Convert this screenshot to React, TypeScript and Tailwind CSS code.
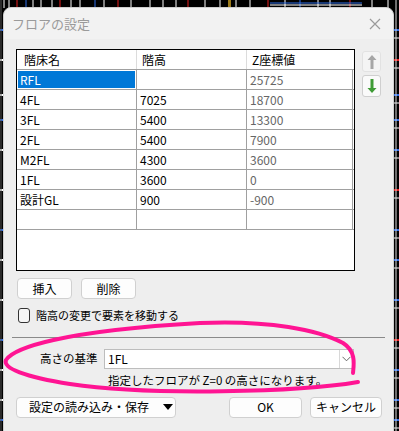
import React from 'react';

const rows = [
  { name: 'RFL', h: '', z: '25725', selected: true },
  { name: '4FL', h: '7025', z: '18700' },
  { name: '3FL', h: '5400', z: '13300' },
  { name: '2FL', h: '5400', z: '7900' },
  { name: 'M2FL', h: '4300', z: '3600' },
  { name: '1FL', h: '3600', z: '0' },
  { name: '設計GL', h: '900', z: '-900' },
  { name: '', h: '', z: '' },
];

const font = { fontFamily: '"Noto Sans CJK JP", "Noto Sans", sans-serif' };

// CAD drawing peeking out behind the dialog
function Backdrop() {
  const xs = [4, 9, 17, 26, 33, 41, 52, 60, 71, 80, 95, 104, 118, 131, 150, 163, 176, 188, 205, 220, 236, 250, 268, 285, 300, 318, 330, 350, 372, 388];
  const ys = [30, 60, 95, 120, 150, 190, 230, 260, 300, 340, 370, 400, 420];
  return (
    <svg className="absolute inset-0" width={399} height={431}>
      <rect width={399} height={431} fill="#000" />
      {xs.map((x, i) => (
        <line key={i} x1={x} y1={0} x2={x} y2={8} stroke={i % 5 === 2 ? '#e81e1e' : i % 7 === 3 ? '#2f6fe8' : '#ffffff'} strokeWidth={1} />
      ))}
      <line x1={270} y1={3} x2={362} y2={3} stroke="#2f6fe8" />
      <line x1={270} y1={5} x2={362} y2={5} stroke="#ffffff" />
      <rect x={228} y={0} width={3} height={7} fill="#9b7a1a" />
      {ys.map((y, i) => (
        <g key={i}>
          <line x1={0} y1={y} x2={3} y2={y} stroke={i % 3 === 0 ? '#2f6fe8' : '#ffffff'} strokeWidth={2} />
          <line x1={394} y1={y} x2={399} y2={y} stroke={i % 4 === 1 ? '#e81e1e' : '#2f6fe8'} strokeWidth={2} />
          <line x1={394} y1={y + 8} x2={399} y2={y + 8} stroke="#ffffff" strokeWidth={1} />
        </g>
      ))}
      <line x1={1} y1={0} x2={1} y2={431} stroke="#555" />
      <line x1={396} y1={0} x2={396} y2={431} stroke="#ddd" />
    </svg>
  );
}

function Arrow({ dir, color }: { dir: 'up' | 'down'; color: string }) {
  return (
    <svg width={10} height={16} viewBox="0 0 10 16">
      {dir === 'up' ? (
        <path d="M5 1 L9.5 6 L6.5 6 L6.5 15 L3.5 15 L3.5 6 L0.5 6 Z" fill={color} />
      ) : (
        <path d="M5 15 L9.5 10 L6.5 10 L6.5 1 L3.5 1 L3.5 10 L0.5 10 Z" fill={color} />
      )}
    </svg>
  );
}

function Btn({ children, className }: { children: React.ReactNode; className: string }) {
  return (
    <button className={`flex items-center justify-center rounded-[4px] border border-[#d0d0d0] bg-[#fdfdfd] text-[12px] text-black ${className}`}>
      {children}
    </button>
  );
}

export default function App() {
  return (
    <div className="relative h-[431px] w-[399px] overflow-hidden bg-black" style={font}>
      <Backdrop />

      {/* Dialog window */}
      <div className="absolute left-[3px] top-[7px] flex h-[430px] w-[391px] flex-col rounded-t-[8px] border border-[#cfcfcf] bg-[#eeeeee]">
        <div className="flex h-[31px] items-center justify-between rounded-t-[8px] bg-[#f2f2f2] pl-[8px] pr-[12px]">
          <span className="text-[13px] text-[#9a9a9a]">フロアの設定</span>
          <svg width={12} height={12} viewBox="0 0 12 12">
            <path d="M1 1 L11 11 M11 1 L1 11" stroke="#9a9a9a" strokeWidth={1.2} />
          </svg>
        </div>

        <div className="flex flex-col px-[12px] pt-[10px]">
          <div className="flex gap-[7px]">
            {/* Floor grid */}
            <div className="h-[222px] w-[340px] border border-black bg-white">
              <div className="flex h-[20px] border-b border-[#a0a0a0] text-[12px] text-black">
                <div className="w-[120px] border-r border-[#dcdcdc] pl-[7px] leading-[19px]">階床名</div>
                <div className="w-[110px] border-r border-[#dcdcdc] pl-[5px] leading-[19px]">階高</div>
                <div className="w-[106px] pl-[5px] leading-[19px]">Z座標値</div>
              </div>
              {rows.map((r, i) => (
                <div key={i} className="flex h-[20px] border-b border-[#a0a0a0] text-[12px]">
                  <div className="w-[120px] border-r border-[#a0a0a0] p-px">
                    <div className={`h-full pl-[2px] leading-[18px] ${r.selected ? 'bg-[#0078d7] text-white' : 'text-black'}`}>{r.name}</div>
                  </div>
                  <div className="w-[110px] border-r border-[#a0a0a0] pl-[3px] leading-[19px] text-black">{r.h}</div>
                  <div className="w-[106px] border-r border-[#a0a0a0] pl-[3px] leading-[19px] text-[#666]">{r.z}</div>
                </div>
              ))}
            </div>

            <div className="flex flex-col gap-[3px] pt-[2px]">
              <div className="flex h-[21px] w-[19px] items-center justify-center rounded-[3px] border border-[#e2e2e2] bg-[#f4f4f4]">
                <Arrow dir="up" color="#a6a6a6" />
              </div>
              <div className="flex h-[22px] w-[19px] items-center justify-center rounded-[3px] border border-[#cfcfcf] bg-[#fafafa]">
                <Arrow dir="down" color="#3e9b35" />
              </div>
            </div>
          </div>

          <div className="mt-[7px] flex gap-[9px] pl-px">
            <Btn className="h-[21px] w-[55px]">挿入</Btn>
            <Btn className="h-[21px] w-[55px]">削除</Btn>
          </div>

          <label className="mt-[8px] flex items-center gap-[6px] pl-[2px]">
            <span className="h-[15px] w-[12px] rounded-[3px] border border-[#333] bg-[#f6f6f6]" />
            <span className="text-[11px] text-black">階高の変更で要素を移動する</span>
          </label>
        </div>

        <div className="mx-[8px] mt-[13px] h-px bg-[#8a8a8a]" />

        <div className="flex items-center pl-[36px] pt-[11px]">
          <span className="w-[64px] text-[11.5px] text-black">高さの基準</span>
          <div className="flex h-[20px] w-[250px] items-center border border-[#bdbdbd] bg-white">
            <span className="flex-1 pl-[3px] text-[12px] text-black">1FL</span>
            <div className="flex h-full w-[14px] items-center justify-center border-l border-[#d8d8d8]">
              <svg width={9} height={6} viewBox="0 0 9 6">
                <path d="M0.5 0.8 L4.5 4.8 L8.5 0.8" fill="none" stroke="#666" strokeWidth={1} />
              </svg>
            </div>
          </div>
        </div>
        <div className="pl-[104px] pt-[3px] text-[11.5px] text-black">指定したフロアが Z=0 の高さになります。</div>

        <div className="flex items-center px-[12px] pt-[8px]">
          <Btn className="h-[21px] w-[160px] gap-[14px] pl-[10px]">
            <span>設定の読み込み・保存</span>
            <svg width={10} height={6} viewBox="0 0 10 6">
              <path d="M0 0 L10 0 L5 6 Z" fill="#000" />
            </svg>
          </Btn>
          <Btn className="ml-auto h-[21px] w-[73px]">OK</Btn>
          <Btn className="ml-[8px] mr-[-1px] h-[21px] w-[72px]">キャンセル</Btn>
        </div>
      </div>

      {/* hand-drawn highlight */}
      <svg className="pointer-events-none absolute inset-0" width={399} height={431}>
        <path
          d="M358 382 C 300 392, 150 396, 70 384 C 25 377, 2 368, 6 360 C 14 348, 60 331, 200 323 C 270 320, 318 330, 343 343 C 356 351, 354 364, 353 373"
          fill="none"
          stroke="#ff1493"
          strokeWidth={4}
          strokeLinecap="round"
        />
      </svg>
    </div>
  );
}
